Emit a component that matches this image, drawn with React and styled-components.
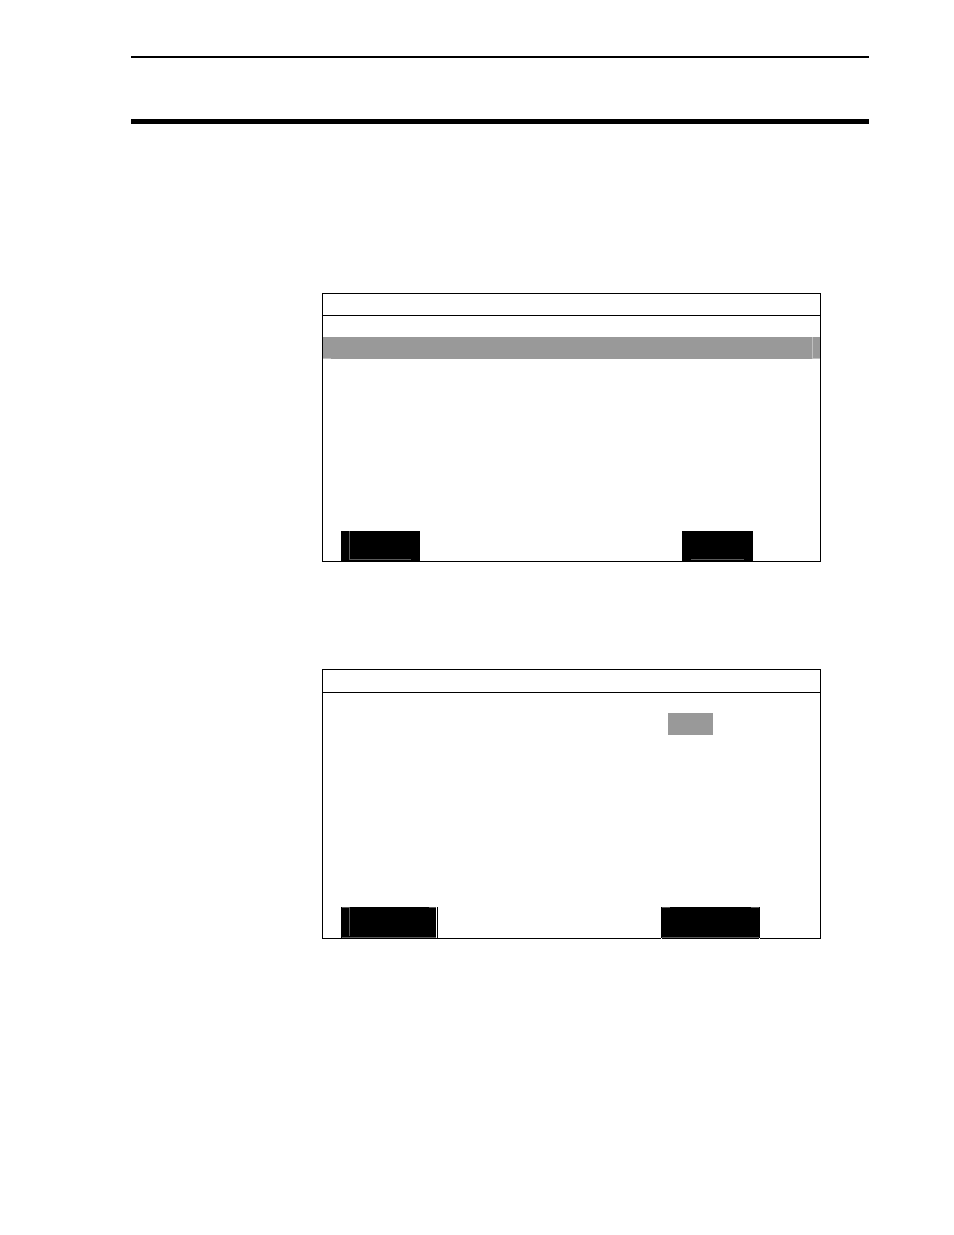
import styled, { createGlobalStyle, css } from 'styled-components';

const GlobalStyle = createGlobalStyle`
	* {
		box-sizing: border-box;
	}
	body {
		margin: 0;
		background: #fff;
		font-family: 'Liberation Sans', Arial, sans-serif;
	}
`;

const Page = styled.main`
	min-height: 100vh;
	padding: 56px 85px 0 131px;
`;
const Header = styled.header`
	height: 68px;
	border-top: 2px solid #000;
	border-bottom: 5px solid #000;
`;
const Screens = styled.div`
	display: flex;
	flex-direction: column;
	gap: 107px;
	padding: 169px 48px 0 191px;
`;
const Screen = styled.section`
	display: flex;
	flex-direction: column;
	border: 1px solid #000;
`;
const TitleBar = styled.div`
	height: ${(props) => props.$height}px;
	border-bottom: 1px solid #000;
`;
const Menu = styled.div`
	display: flex;
	flex-direction: column;
	min-height: ${(props) => props.$height}px;
	padding-top: ${(props) => props.$top}px;
`;
const SelectedRow = styled.div`
	height: 22px;
	background:
		linear-gradient(#c0c0c0, #c0c0c0) left bottom / 8px 1px no-repeat,
		linear-gradient(#c0c0c0, #c0c0c0) right bottom / 8px 1px no-repeat,
		linear-gradient(#c0c0c0, #c0c0c0) right 7px top / 1px 100% no-repeat,
		#999;
`;
const SelectedValue = styled.div`
	align-self: flex-end;
	width: 45px;
	height: 22px;
	margin-right: 107px;
	background: #999;
`;
const SoftKeys = styled.div`
	display: flex;
	justify-content: space-between;
	padding: 0 ${(props) => props.$right}px 0 18px;
`;

const line = 'linear-gradient(#5a5a5a, #5a5a5a)';
const notch = 'linear-gradient(#fff, #fff)';

// thin highlights along the edges of each key
const edges = {
	back: css`
		background:
			${line} 8px 0 / 1px 28px no-repeat,
			${line} 8px 28px / 62px 1px no-repeat,
			#000;
	`,
	select: css`
		background:
			${line} 9px 28px / 53px 1px no-repeat,
			#000;
	`,
	cancel: css`
		background:
			${line} 1px 0 / 8px 1px no-repeat,
			${line} right top / 7px 1px no-repeat,
			${line} 8px 0 / 1px 29px no-repeat,
			${line} 1px 30px / 100% 1px no-repeat,
			#000;
		box-shadow: 1px 0 #fff, 2px 0 #000;
	`,
	change: css`
		margin-bottom: -1px;
		background:
			${line} 1px 0 / 8px 1px no-repeat,
			${line} right 1px top / 8px 1px no-repeat,
			${notch} left bottom / 1px 1px no-repeat,
			${notch} right bottom / 1px 1px no-repeat,
			${line} 1px 30px / 97px 1px no-repeat,
			#000;
	`,
};

const SoftKey = styled.button`
	width: ${(props) => props.$width}px;
	height: ${(props) => props.$height}px;
	padding: 0;
	border: none;
	border-radius: 0;
	cursor: pointer;
	${(props) => edges[props.$edge]}
`;

const App = () => {
	return (
		<Page>
			<GlobalStyle />
			<Header />
			<Screens>
				<Screen>
					<TitleBar $height={22} />
					<Menu $height={215} $top={21}>
						<SelectedRow />
					</Menu>
					<SoftKeys $right={67}>
						<SoftKey $width={79} $height={30} $edge="back" />
						<SoftKey $width={71} $height={30} $edge="select" />
					</SoftKeys>
				</Screen>
				<Screen>
					<TitleBar $height={23} />
					<Menu $height={214} $top={20}>
						<SelectedValue />
					</Menu>
					<SoftKeys $right={60}>
						<SoftKey $width={95} $height={31} $edge="cancel" />
						<SoftKey $width={99} $height={32} $edge="change" />
					</SoftKeys>
				</Screen>
			</Screens>
		</Page>
	);
};

export default App;
